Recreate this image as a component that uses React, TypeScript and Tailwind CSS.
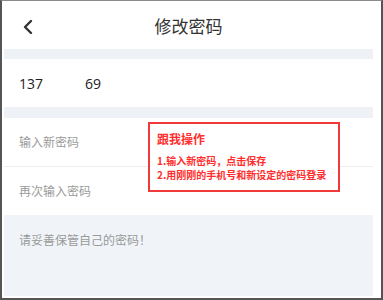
import { ChevronLeft } from "lucide-react"

export default function App() {
  return (
    <div
      className="relative w-[383px] h-[300px] border-t border-t-[#8a8a8a] border-x-2 border-b-2 border-[#555555] pl-[2px] pr-[8px] pb-[2px] bg-white flex flex-col"
      style={{ fontFamily: '"Noto Sans CJK SC", "Noto Sans", sans-serif' }}
    >
      {/* header */}
      <div className="relative h-[48px] flex items-center justify-center shrink-0">
        <ChevronLeft className="absolute left-[12px] top-[14px] w-[24px] h-[24px] text-[#333333]" strokeWidth={2.4} />
        <h1 className="text-[17px] text-[#333333] leading-none">修改密码</h1>
      </div>

      <div className="h-[10px] bg-[#eef2f6] shrink-0" />

      {/* phone */}
      <div className="h-[48px] flex items-center pl-[15px] shrink-0 text-[14px] text-[#222222]" style={{ fontFamily: '"Open Sans", "Noto Sans", sans-serif' }}>
        <span>137</span>
        <span className="ml-[42px]">69</span>
      </div>

      <div className="h-[11px] bg-[#eef2f6] shrink-0" />

      <div className="h-[49px] flex items-center pl-[15px] border-b border-[#eeeeee] shrink-0">
        <span className="text-[12px] text-[#9a9a9a]">输入新密码</span>
      </div>
      <div className="h-[48px] flex items-center pl-[15px] shrink-0">
        <span className="text-[12px] text-[#9a9a9a]">再次输入密码</span>
      </div>

      <div className="flex-1 bg-[#f0f4f8] pl-[15px] pt-[16px]">
        <p className="text-[12px] text-[#9a9a9a] leading-[18px]">请妥善保管自己的密码！</p>
      </div>

      {/* annotation */}
      <div className="absolute left-[146px] top-[121px] w-[192px] h-[70px] border-2 border-[#ee3a3a] bg-white pl-[7px] pt-[7px]">
        <p className="text-[12px] font-bold text-[#ff2e2e] leading-[16px]">跟我操作</p>
        <div className="mt-[7px] text-[10px] font-bold text-[#ff2e2e] leading-[14px]">
          <p>1.输入新密码，点击保存</p>
          <p>2.用刚刚的手机号和新设定的密码登录</p>
        </div>
      </div>
    </div>
  )
}
